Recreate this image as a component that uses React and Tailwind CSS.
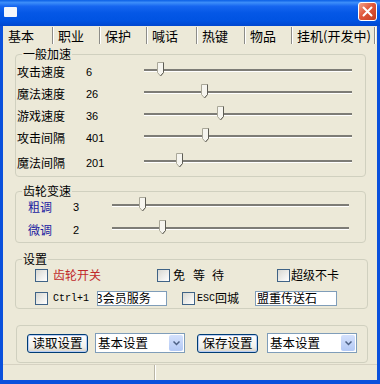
import React from "react";

const cjk = "font-['Noto_Sans_CJK_SC','Liberation_Sans',sans-serif]";

const tabs = [
  { title: "基本", w: "w-[50px]" },
  { title: "职业", w: "w-[47px]" },
  { title: "保护", w: "w-[47px]" },
  { title: "喊话", w: "w-[50px]" },
  { title: "热键", w: "w-[48px]" },
  { title: "物品", w: "w-[47px]" },
  { title: "挂机(开发中)", w: "w-[83px]" },
];

// pos = thumb centre, px from the track start
const speedRows = [
  { label: "攻击速度", value: "6", pos: 16 },
  { label: "魔法速度", value: "26", pos: 60 },
  { label: "游戏速度", value: "36", pos: 76 },
  { label: "攻击间隔", value: "401", pos: 61 },
  { label: "魔法间隔", value: "201", pos: 35 },
];

const gearRows = [
  { label: "粗调", value: "3", pos: 30 },
  { label: "微调", value: "2", pos: 50 },
];

const Group = ({ label, className, children }) => (
  <div
    className={`relative border border-[#d0d0bf] rounded-[4px] shrink-0 ${className}`}
  >
    {label && (
      <span className="absolute -top-[9px] left-[6px] px-[1px] bg-[#ece9d8] leading-[16px] text-[12px] text-black">
        {label}
      </span>
    )}
    {children}
  </div>
);

const Slider = ({ pos, width }) => (
  <div className={`relative h-full pt-[8px] ${width}`}>
    <div className="h-[2px] bg-[#7d7c76] shadow-[0_1px_0_#ffffff]" />
    <svg
      width="7"
      height="15"
      viewBox="0 0 7 15"
      className="absolute top-[1px]"
      style={{ left: pos - 3 }}
    >
      <path
        d="M0.5 0.5H6.5V10.5L3.5 14L0.5 10.5Z"
        fill="#f6f5ef"
        stroke="#a9a798"
      />
      <path d="M6.5 0.5V10.5L3.5 14" fill="none" stroke="#5e5d55" />
    </svg>
  </div>
);

const Checkbox = () => (
  <span className="w-[13px] h-[13px] shrink-0 border border-[#3f6386] bg-[linear-gradient(135deg,#d8d8d2,#ffffff)]" />
);

const Combo = ({ value }) => (
  <div className="relative w-[90px] h-[20px] border border-[#7f9db9] bg-white flex items-center pl-[2px] text-[12.5px]">
    {value}
    <div className="absolute right-[1px] top-[1px] w-[14px] h-[16px] rounded-[2px] bg-[linear-gradient(to_bottom,#d4e1fc,#b3c9f5)] flex items-center justify-center">
      <svg width="7" height="5" viewBox="0 0 7 5">
        <path d="M0.5 0.5L3.5 3.5L6.5 0.5" fill="none" stroke="#4d6185" strokeWidth="1.5" />
      </svg>
    </div>
  </div>
);

const XpButton = ({ children }) => (
  <div className="w-[61px] h-[19px] rounded-[3px] border border-[#003c74] bg-[linear-gradient(to_bottom,#ffffff,#f0efe9_70%,#d8d3c8)] shadow-[inset_0_0_0_1px_#b9cdf4] flex items-center justify-center text-[12.5px]">
    {children}
  </div>
);

export default function App() {
  return (
    <div className={`w-[380px] h-[384px] flex flex-col bg-[#0a50dc] text-black ${cjk}`}>
      {/* title bar */}
      <div className="h-[26px] shrink-0 flex items-start bg-[linear-gradient(to_bottom,#0a5fe6_0%,#3d8ef9_10%,#1666f0_24%,#0457e6_50%,#0053e2_80%,#0047cf_100%)]">
        <div className="ml-[4px] mt-[7px] w-[13px] h-[10px] bg-[#f4f6fb] rounded-[1px]" />
        <div className="ml-auto mr-[3px] mt-[2px] w-[19px] h-[19px] rounded-[3px] border border-white bg-[linear-gradient(135deg,#f2a48d,#e0583b_45%,#c43c20)] flex items-center justify-center">
          <svg width="11" height="11" viewBox="0 0 11 11">
            <path
              d="M1.5 1.5L9.5 9.5M9.5 1.5L1.5 9.5"
              stroke="white"
              strokeWidth="2"
              strokeLinecap="round"
            />
          </svg>
        </div>
      </div>

      <div className="mx-[3px] mb-[4px] flex-1 flex flex-col bg-[#ece9d8]">
        {/* tabs */}
        <div className="h-[19px] shrink-0 flex">
          {tabs.map((t) => (
            <div
              key={t.title}
              className={`${t.w} my-[1px] pl-[5px] flex items-center border-r border-[#8c8c88] shadow-[1px_0_0_#ffffff] text-[13px] leading-none whitespace-nowrap`}
            >
              {t.title}
            </div>
          ))}
        </div>

        {/* 一般加速 */}
        <Group label="一般加速" className="ml-[12px] mt-[9px] w-[351px] h-[123px] pt-[6px]">
          {speedRows.map((r, i) => (
            <div
              key={r.label}
              className={`h-[22px] flex items-center pl-[1px] ${i === 4 ? "mt-[3px]" : ""}`}
            >
              <span className="w-[69px] text-[12px]">{r.label}</span>
              <span className="w-[58px] text-[11px] font-['Liberation_Sans',sans-serif]">
                {r.value}
              </span>
              <Slider pos={r.pos} width="w-[208px]" />
            </div>
          ))}
        </Group>

        {/* 齿轮变速 */}
        <Group label="齿轮变速" className="ml-[12px] mt-[14px] w-[351px] h-[52px] pt-[4px]">
          {gearRows.map((r, i) => (
            <div
              key={r.label}
              className={`h-[22px] flex items-center pl-[12px] ${i === 1 ? "mt-[1px]" : ""}`}
            >
              <span className="w-[45px] text-[12px] text-[#1b1ba0]">{r.label}</span>
              <span className="w-[39px] text-[11px] font-['Liberation_Sans',sans-serif]">
                {r.value}
              </span>
              <Slider pos={r.pos} width="w-[237px]" />
            </div>
          ))}
        </Group>

        {/* 设置 */}
        <Group label="设置" className="ml-[12px] mt-[16px] w-[353px] h-[50px] pt-[5px] text-[12px]">
          <div className="h-[20px] flex items-center pl-[19px]">
            <div className="w-[122px] flex items-center gap-[5px]">
              <Checkbox />
              <span className="text-[#c0282a]">齿轮开关</span>
            </div>
            <div className="w-[120px] flex items-center">
              <Checkbox />
              <span className="ml-[3px]">免</span>
              <span className="ml-[8px]">等</span>
              <span className="ml-[7px]">待</span>
            </div>
            <div className="flex items-center gap-[1px]">
              <Checkbox />
              <span>超级不卡</span>
            </div>
          </div>
          <div className="h-[18px] mt-[4px] flex items-center pl-[19px]">
            <div className="w-[62px] flex items-center gap-[5px]">
              <Checkbox />
              <span className="font-['Liberation_Mono',monospace] text-[10px]">Ctrl+1</span>
            </div>
            <div className="w-[70px] h-[15px] border border-[#7f9db9] bg-white overflow-hidden flex items-center whitespace-nowrap">
              <span className="-ml-[2px]">3会员服务</span>
            </div>
            <div className="ml-[15px] w-[73px] flex items-center gap-[2px]">
              <Checkbox />
              <span className="font-['Liberation_Mono',monospace] text-[10px]">ESC</span>
              <span className="-ml-[2px]">回城</span>
            </div>
            <div className="w-[82px] h-[15px] border border-[#7f9db9] bg-white overflow-hidden flex items-center pl-[1px] whitespace-nowrap">
              盟重传送石
            </div>
          </div>
        </Group>

        {/* 读取 / 保存 */}
        <Group className="ml-[13px] mt-[16px] w-[352px] h-[38px] pt-[7px] pl-[10px]">
          <div className="h-[20px] flex items-center">
            <XpButton>读取设置</XpButton>
            <div className="ml-[7px]">
              <Combo value="基本设置" />
            </div>
            <div className="ml-[12px]">
              <XpButton>保存设置</XpButton>
            </div>
            <div className="ml-[9px]">
              <Combo value="基本设置" />
            </div>
          </div>
        </Group>

        {/* status bar */}
        <div className="mt-[1px] h-[16px] shrink-0 flex border-t border-[#d6d2c2]">
          <div className="w-[152px] border-r border-[#b9b5a5] shadow-[1px_0_0_#ffffff]" />
          <div className="flex-1" />
        </div>
      </div>
    </div>
  );
}
